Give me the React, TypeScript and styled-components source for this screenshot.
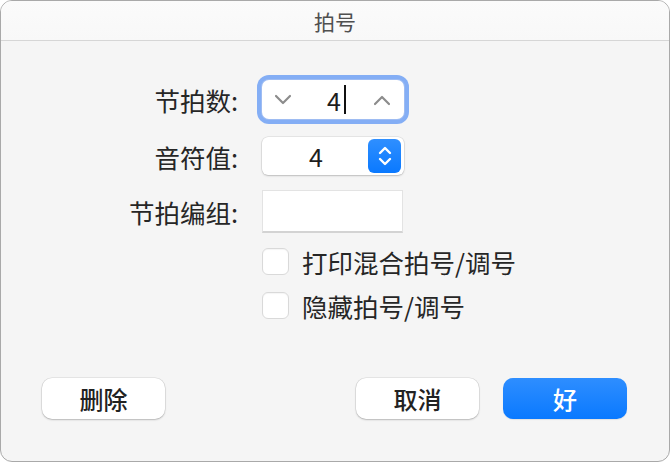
import React from 'react';
import styled, { createGlobalStyle } from 'styled-components';

const GlobalStyle = createGlobalStyle`
  html, body {
    margin: 0;
    padding: 0;
    background: #ffffff;
  }
  body {
    font-family: "Noto Sans CJK SC", "Noto Sans", sans-serif;
  }
`;

const Window = styled.div`
  box-sizing: border-box;
  width: 670px;
  height: 462px;
  border: 1px solid #a9a9a9;
  border-radius: 12px;
  background: #f5f5f5;
  overflow: hidden;
  display: flex;
  flex-direction: column;
`;

const TitleBar = styled.div`
  height: 39px;
  flex: none;
  display: flex;
  align-items: center;
  justify-content: center;
  background: linear-gradient(#fbfbfb, #f8f8f8);
  border-bottom: 1px solid #d6d6d6;
  font-size: 21px;
  color: #4f4f4f;
`;

const Body = styled.div`
  flex: 1;
  display: flex;
  flex-direction: column;
`;

const Form = styled.div`
  padding-top: 38px;
  display: flex;
  flex-direction: column;
`;

const Row = styled.div<{ $mt?: number; $h: number }>`
  display: grid;
  grid-template-columns: 237px auto;
  column-gap: 24px;
  align-items: center;
  height: ${(p) => p.$h}px;
  margin-top: ${(p) => p.$mt ?? 0}px;
`;

const Label = styled.div`
  text-align: right;
  font-size: 25.5px;
  color: #262626;
  white-space: nowrap;
`;

const Stepper = styled.div`
  box-sizing: border-box;
  width: 142px;
  height: 39px;
  background: #fff;
  border-radius: 7px;
  box-shadow: 0 0 0 1px #9ebcf2, 0 0 0 5px #84aef5;
  display: flex;
  align-items: center;
  padding: 0 12px 0 11px;
`;

const StepValue = styled.div`
  flex: 1;
  display: flex;
  justify-content: center;
  align-items: center;
  font-size: 25px;
  color: #1e1e1e;
  padding-left: 8px;
`;

const Caret = styled.span`
  display: inline-block;
  width: 2px;
  height: 29px;
  background: #111;
  margin-left: 3px;
`;

const Popup = styled.div`
  box-sizing: border-box;
  width: 142px;
  height: 38px;
  background: #fff;
  border-radius: 6px;
  box-shadow: 0 0 0 0.5px rgba(0, 0, 0, 0.12), 0 1px 2px rgba(0, 0, 0, 0.18);
  display: flex;
  align-items: center;
  padding-right: 3px;
`;

const PopupValue = styled.div`
  flex: 1;
  text-align: center;
  font-size: 25px;
  color: #1e1e1e;
  padding-left: 2px;
`;

const PopupArrows = styled.div`
  width: 33px;
  height: 34px;
  border-radius: 6px;
  background: linear-gradient(#2f8fff, #0a79ff);
  display: flex;
  align-items: center;
  justify-content: center;
`;

const TextField = styled.div`
  box-sizing: border-box;
  width: 141px;
  height: 43px;
  background: #fff;
  border: 1px solid #e3e3e3;
  border-bottom: 2px solid #d3d3d3;
`;

const CheckRow = styled.label`
  display: flex;
  align-items: center;
  gap: 13px;
  font-size: 25.5px;
  color: #262626;
  white-space: nowrap;
`;

const CheckBox = styled.span`
  box-sizing: border-box;
  width: 27px;
  height: 27px;
  border-radius: 6px;
  background: #fff;
  border: 1px solid #d9d9d9;
  box-shadow: inset 0 1px 1px rgba(0, 0, 0, 0.04);
`;

const Footer = styled.div`
  margin-top: auto;
  display: flex;
  align-items: center;
  padding: 0 42px 42px 41px;
`;

const Button = styled.button<{ $primary?: boolean }>`
  box-sizing: border-box;
  width: ${(p) => (p.$primary ? 124 : 123)}px;
  height: 41px;
  border: none;
  border-radius: 10px;
  font-family: inherit;
  font-size: 24px;
  font-weight: 500;
  color: ${(p) => (p.$primary ? '#fff' : '#222')};
  background: ${(p) =>
    p.$primary ? 'linear-gradient(#2e8eff, #0a79ff)' : '#ffffff'};
  box-shadow: ${(p) =>
    p.$primary
      ? '0 1px 1px rgba(0,0,0,0.08)'
      : '0 0 0 0.5px rgba(0,0,0,0.12), 0 1px 2px rgba(0,0,0,0.2)'};
  display: flex;
  align-items: center;
  justify-content: center;
  padding: 0;
`;

const Spacer = styled.div`
  flex: 1;
`;

const ButtonGap = styled.div`
  width: 24px;
`;

const Chevron: React.FC<{ up?: boolean }> = ({ up }) => (
  <svg width="20" height="12" viewBox="0 0 20 12">
    <polyline
      points={up ? '3,10 10,3 17,10' : '3,2 10,9 17,2'}
      fill="none"
      stroke="#8c8c8c"
      strokeWidth="2.2"
      strokeLinecap="round"
      strokeLinejoin="round"
    />
  </svg>
);

const UpDown: React.FC = () => (
  <svg width="16" height="24" viewBox="0 0 16 24">
    <polyline
      points="3,9 8,4 13,9"
      fill="none"
      stroke="#fff"
      strokeWidth="2.4"
      strokeLinecap="round"
      strokeLinejoin="round"
    />
    <polyline
      points="3,15 8,20 13,15"
      fill="none"
      stroke="#fff"
      strokeWidth="2.4"
      strokeLinecap="round"
      strokeLinejoin="round"
    />
  </svg>
);

const App: React.FC = () => {
  return (
    <>
      <GlobalStyle />
      <Window>
        <TitleBar>拍号</TitleBar>
        <Body>
          <Form>
            <Row $h={41}>
              <Label>节拍数:</Label>
              <Stepper>
                <Chevron />
                <StepValue>
                  4<Caret />
                </StepValue>
                <Chevron up />
              </Stepper>
            </Row>
            <Row $h={38} $mt={17}>
              <Label>音符值:</Label>
              <Popup>
                <PopupValue>4</PopupValue>
                <PopupArrows>
                  <UpDown />
                </PopupArrows>
              </Popup>
            </Row>
            <Row $h={43} $mt={15}>
              <Label>节拍编组:</Label>
              <TextField />
            </Row>
            <Row $h={34} $mt={10}>
              <span />
              <CheckRow>
                <CheckBox />
                打印混合拍号/调号
              </CheckRow>
            </Row>
            <Row $h={34} $mt={10}>
              <span />
              <CheckRow>
                <CheckBox />
                隐藏拍号/调号
              </CheckRow>
            </Row>
          </Form>
          <Footer>
            <Button>删除</Button>
            <Spacer />
            <Button>取消</Button>
            <ButtonGap />
            <Button $primary>好</Button>
          </Footer>
        </Body>
      </Window>
    </>
  );
};

export default App;
